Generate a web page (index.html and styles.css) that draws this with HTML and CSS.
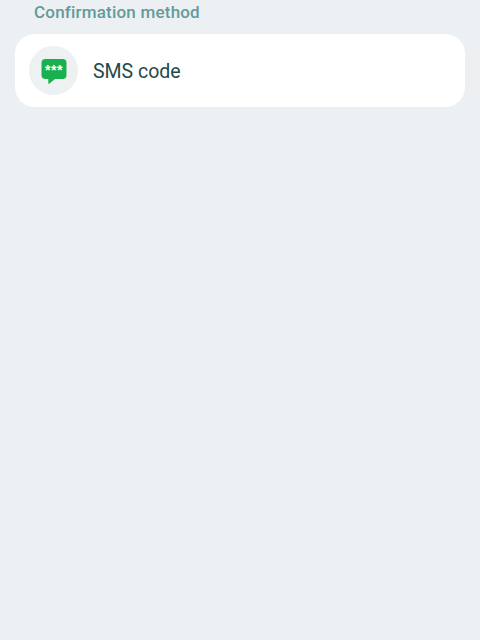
FILE: index.html
```html
<!DOCTYPE html>
<html lang="en">
<head>
  <meta charset="UTF-8" />
  <title>Confirmation method</title>
  <link rel="stylesheet" href="styles.css">
</head>
<body>
  <h2 class="section-title">Confirmation method</h2>
  <div class="card">
    <div class="method-icon">
      <svg width="26" height="26" viewBox="0 0 26 26">
        <path d="M4.500 1h17a4 4 0 0 1 4 4v12a4 4 0 0 1-4 4H14l-5.500 4.500a0.700 0.700 0 0 1-1.200-0.500V21H4.500a4 4 0 0 1-4-4V5a4 4 0 0 1 4-4z" fill="#19b04f"/>
        <text class="stars" x="13" y="16.500" text-anchor="middle">***</text>
      </svg>
    </div>
    <span class="method-name">SMS code</span>
  </div>
</body>
</html>
```

FILE: styles.css
```css
* {
  margin: 0; padding: 0; box-sizing: border-box;
}
body {
  width: 480px;
  height: 640px;
  overflow: hidden;
  background-color: #ecf0f3;
  font-family: Roboto, "Liberation Sans", sans-serif;
  padding: 2px 15px 0;
}
.section-title {
  font-size: 17px;
  font-weight: 500;
  line-height: 20px;
  letter-spacing: 0.2px;
  color: #659a9a;
  padding-left: 19px;
  margin-bottom: 12px;
}
.card {
  display: flex;
  align-items: center;
  gap: 15px;
  height: 73px;
  padding-left: 14px;
  background-color: #fff;
  border-radius: 20px;
}
.method-icon {
  display: flex;
  align-items: center;
  justify-content: center;
  width: 49px;
  height: 49px;
  border-radius: 50%;
  background-color: #eef1f2;
}
.stars {
  font-family: "Liberation Sans", sans-serif;
  font-size: 14px;
  font-weight: 700;
  letter-spacing: 0.5px;
  fill: #fff;
}
.method-name {
  padding-top: 1px;
  font-size: 19.500px;
  color: #1f4a4c;
}
```
